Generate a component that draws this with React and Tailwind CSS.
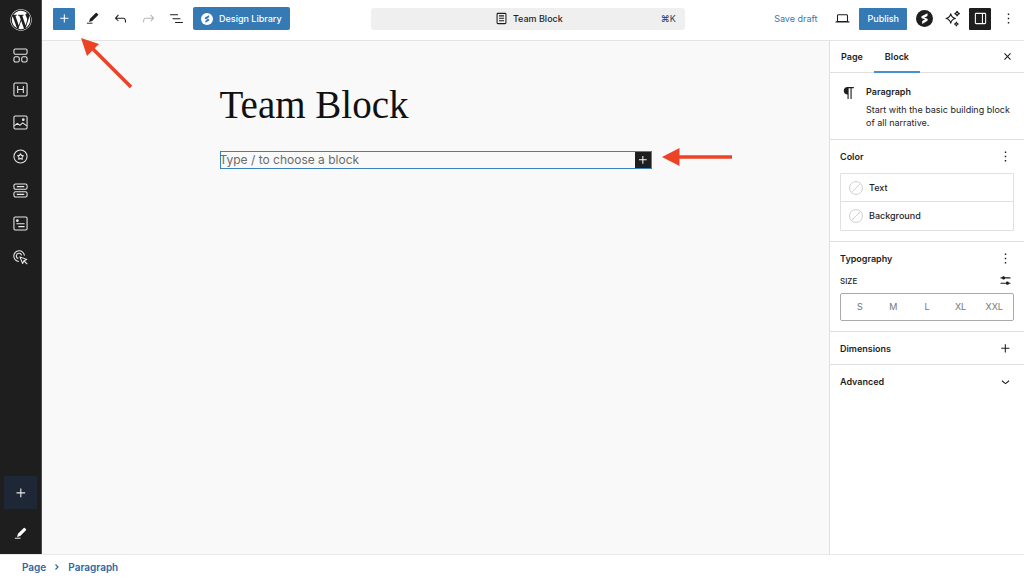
import { FaWordpress } from "react-icons/fa";

const ICONS = {
  plus: "M11 12.5V17.5H12.5V12.5H17.5V11H12.5V6H11V11H6V12.5H11Z",
  undo: "M18.3 11.7c-.6-.6-1.4-.9-2.3-.9H6.7l2.9-3.3-1.1-1-4.5 5L8.5 16l1-1-2.7-2.7H16c.5 0 .9.2 1.3.5 1 1 1 3.4 1 4.5v.3h1.5v-.2c0-1.5 0-4.3-1.5-5.7z",
  redo: "M15.6 6.5l-1.1 1 2.9 3.3H8c-.9 0-1.7.3-2.3.9-1.4 1.5-1.4 4.2-1.4 5.6v.2h1.5v-.3c0-1.1 0-3.5 1-4.5.3-.3.7-.5 1.3-.5h9.2L14.5 15l1.1 1.1 4.6-4.6-4.6-5z",
  listView: "M3 6h11v1.5H3V6Zm3.5 5.5h11V13h-11v-1.5ZM21 17H10v1.5h11V17Z",
  more: "M13 19h-2v-2h2v2zm0-6h-2v-2h2v2zm0-6h-2V5h2v2z",
  drawer:
    "M18 4H6c-1.1 0-2 .9-2 2v12c0 1.1.9 2 2 2h12c1.1 0 2-.9 2-2V6c0-1.1-.9-2-2-2zm-4 14.5H6c-.3 0-.5-.2-.5-.5V6c0-.3.2-.5.5-.5h8v13zm4.5-.5c0 .3-.2.5-.5.5h-2.5v-13H18c.3 0 .5.2.5.5v12z",
  desktop:
    "M20.5 16h-.7V8c0-1.1-.9-2-2-2H6.2c-1.1 0-2 .9-2 2v8h-.7c-.8 0-1.5.7-1.5 1.5h20c0-.8-.7-1.5-1.5-1.5zM5.7 8c0-.3.2-.5.5-.5h11.6c.3 0 .5.2.5.5v7.6H5.7V8z",
  page: "M15.5 7.5h-7V9h7V7.5Zm-7 3.5h7v1.5h-7V11Zm7 3.5h-7V16h7v-1.5ZM17 4H7a2 2 0 0 0-2 2v12a2 2 0 0 0 2 2h10a2 2 0 0 0 2-2V6a2 2 0 0 0-2-2ZM7 5.5h10a.5.5 0 0 1 .5.5v12a.5.5 0 0 1-.5.5H7a.5.5 0 0 1-.5-.5V6a.5.5 0 0 1 .5-.5Z",
  paragraph:
    "m9.996 14v-.225l.004 0v6.225h1.5v-14.5h2.5v14.5h1.5v-14.5h3v-1.5h-8.504c-2.761 0-5 2.239-5 5 0 2.761 2.239 5 5 5z",
  settings:
    "m19 7.5h-7.628c-.309-.874-1.142-1.5-2.122-1.5-.98 0-1.813.626-2.122 1.5h-2.128v1.5h2.128c.309.874 1.142 1.5 2.122 1.5.98 0 1.813-.626 2.122-1.5h7.628zm0 7.5h-2.128c-.309-.874-1.142-1.5-2.122-1.5s-1.813.626-2.122 1.5h-7.628v1.5h7.628c.309.874 1.142 1.5 2.122 1.5s1.813-.626 2.122-1.5h2.128z",
  chevronDown: "M17.5 11.6L12 16l-5.500-4.400.9-1.200L12 14l4.500-3.600 1 1.200z",
  close:
    "M12 13.06l3.712 3.713 1.061-1.06L13.061 12l3.712-3.712-1.06-1.06L12 10.938 8.288 7.227l-1.061 1.06L10.939 12l-3.712 3.712 1.06 1.061L12 13.061z",
};

function Icon({ name, className = "size-[17px]" }) {
  return (
    <svg viewBox="0 0 24 24" fill="currentColor" fillRule="evenodd" className={className} aria-hidden="true">
      <path d={ICONS[name]} />
    </svg>
  );
}

function Pencil({ className = "size-[17px]" }) {
  return (
    <svg viewBox="0 0 24 24" fill="currentColor" className={className} aria-hidden="true">
      <path d="M17.200 3.200a1.200 1.200 0 0 1 1.700 0l1.900 1.900a1.200 1.200 0 0 1 0 1.700l-9.300 9.300-5 1.400 1.400-5z" />
      <path d="M3 18.600h9v2H3z" opacity=".75" />
    </svg>
  );
}

// Lightning-shaped "S" on a disc, the plugin's mark
function SpectraMark({ className, disc, bolt }) {
  return (
    <svg viewBox="0 0 24 24" className={className} aria-hidden="true">
      <circle cx="12" cy="12" r="12" fill={disc} />
      <path
        fill={bolt}
        d="M16.200 4.500v4l-4.500 2.500 3.600 1c1.600.6 1.900 2.500.4 3.400l-7 4.300v-4l4.200-2.500-4-1.100c-1.700-.6-1.900-2.600-.4-3.500z"
      />
    </svg>
  );
}

function Sparkles() {
  return (
    <svg viewBox="0 0 24 24" fill="none" stroke="currentColor" strokeWidth="1.700" strokeLinejoin="round" className="size-[17px]" aria-hidden="true">
      <path d="M9.500 5.500c.9 4 2.500 5.600 6.500 6.500-4 .9-5.600 2.500-6.500 6.500-.9-4-2.500-5.600-6.500-6.500 4-.9 5.600-2.500 6.500-6.500z" />
      <path d="M18.500 1.800c.5 1.900 1.200 2.700 3.200 3.200-2 .5-2.700 1.300-3.200 3.200-.5-1.900-1.200-2.700-3.200-3.200 2-.5 2.700-1.300 3.200-3.200zM17.500 17.200c.4 1.600 1 2.200 2.600 2.600-1.600.4-2.200 1-2.600 2.600-.4-1.600-1-2.200-2.600-2.600 1.600-.4 2.200-1 2.600-2.600z" />
    </svg>
  );
}

const RAIL_ITEMS = [
  {
    label: "Container",
    art: (
      <>
        <rect x="1.500" y="1.500" width="21" height="8.500" rx="2" />
        <rect x="1.500" y="14" width="8.500" height="8.500" rx="2.500" />
        <rect x="14" y="14" width="8.500" height="8.500" rx="2.500" />
      </>
    ),
  },
  {
    label: "Heading",
    art: (
      <>
        <rect x="1.500" y="1.500" width="21" height="21" rx="2" />
        <path d="M7.500 6.500v11M16.500 6.500v11M7.500 12h9" />
      </>
    ),
  },
  {
    label: "Image",
    art: (
      <>
        <rect x="1.500" y="1.500" width="21" height="21" rx="2" />
        <path d="M2 17.500l5-4 4 3 4.500-4 6.500 5" />
        <circle cx="16.500" cy="7.500" r="1.300" fill="currentColor" />
      </>
    ),
  },
  {
    label: "Icon",
    art: (
      <>
        <circle cx="12" cy="12" r="10.500" />
        <path d="M12 7.500l1.500 2.700 3.100.6-2.100 2.400.4 3.200-2.900-1.300-2.900 1.300.4-3.200-2.100-2.400 3.100-.6z" />
      </>
    ),
  },
  {
    label: "Buttons",
    art: (
      <>
        <rect x="1.500" y="1.500" width="21" height="8.500" rx="2.500" />
        <rect x="1.500" y="14" width="21" height="8.500" rx="2.500" />
        <path d="M6 5.800h12M6 18.200h12" />
      </>
    ),
  },
  {
    label: "Info Box",
    art: (
      <>
        <rect x="1.500" y="1.500" width="21" height="21" rx="2" />
        <path d="M5.500 12.500h13M8.500 17h10" />
        <circle cx="7" cy="7.500" r="1.300" fill="currentColor" />
      </>
    ),
  },
  {
    label: "Call to Action",
    art: (
      <>
        <path d="M9.500 18.300A8.500 8.500 0 1 1 18.300 9" />
        <path d="M8.500 13.700A4.300 4.300 0 1 1 13.800 8.500" />
        <path d="M11 11l11 4.200-4.600 1.900-2 4.600z" />
        <path d="M17.800 17.600l5 5" />
      </>
    ),
  },
];

function Rail() {
  return (
    <aside className="flex w-[42px] shrink-0 flex-col items-center border-r border-[#4a4a4a] bg-[#1e1e1e] text-[#e8e8e8]">
      <a href="#dashboard" aria-label="Dashboard" className="flex h-[39px] items-center text-white">
        <FaWordpress className="size-[22px]" />
      </a>
      <nav className="grid h-[235px] w-full grid-rows-7">
        {RAIL_ITEMS.map((item) => (
          <button key={item.label} type="button" aria-label={item.label} className="flex items-center justify-center">
            <svg viewBox="0 0 24 24" fill="none" stroke="currentColor" strokeWidth="1.700" strokeLinejoin="round" className="size-[15px]">
              {item.art}
            </svg>
          </button>
        ))}
      </nav>
      <div className="mt-auto flex flex-col items-center gap-2 pb-1">
        <button type="button" aria-label="Add quick block" className="flex size-[33px] items-center justify-center bg-[#1e2736]">
          <Icon name="plus" className="size-[18px]" />
        </button>
        <button type="button" aria-label="Edit quick blocks" className="flex size-[33px] items-center justify-center text-white">
          <Pencil className="size-[15px]" />
        </button>
      </div>
    </aside>
  );
}

function ToolButton({ label, className = "", children }) {
  return (
    <button type="button" aria-label={label} className={`flex size-[22px] shrink-0 items-center justify-center rounded-[1px] ${className}`}>
      {children}
    </button>
  );
}

function Header() {
  return (
    <header className="flex h-[41px] shrink-0 items-center border-b border-[#e4e4e4] bg-white pr-[5px] pb-[3px] pl-[11px]">
      <div className="flex items-center gap-[6px]">
        <ToolButton label="Block inserter" className="bg-[#3579b5] text-white">
          <Icon name="plus" />
        </ToolButton>
        <ToolButton label="Tools">
          <Pencil className="size-[15px]" />
        </ToolButton>
        <ToolButton label="Undo">
          <Icon name="undo" />
        </ToolButton>
        <ToolButton label="Redo" className="text-[#b8b8b8]">
          <Icon name="redo" />
        </ToolButton>
        <ToolButton label="Document overview">
          <Icon name="listView" />
        </ToolButton>
        <button type="button" className="flex h-[23px] items-center gap-[6px] rounded-[2px] bg-[#3579b5] px-2 font-medium whitespace-nowrap text-white">
          <SpectraMark className="size-3" disc="#fff" bolt="#3579b5" />
          Design Library
        </button>
      </div>

      <div className="mr-2 flex flex-1 justify-center">
        <button type="button" className="grid h-[22px] w-full max-w-[314px] grid-cols-[1fr_auto_1fr] items-center rounded-[3px] bg-[#efefef] px-[9px]">
          <span className="col-start-2 flex items-center gap-[3px] font-medium">
            <Icon name="page" />
            Team Block
          </span>
          <span className="text-right text-[#3c3c3c]">⌘K</span>
        </button>
      </div>

      <div className="flex items-center gap-[6px]">
        <button type="button" className="mr-2 whitespace-nowrap text-[#3579b5]">Save draft</button>
        <ToolButton label="View">
          <Icon name="desktop" />
        </ToolButton>
        <button type="button" className="h-[22px] rounded-[1px] bg-[#3579b5] px-2 font-medium text-white">Publish</button>
        <ToolButton label="Spectra settings">
          <SpectraMark className="size-[17px]" disc="#1e1e1e" bolt="#fff" />
        </ToolButton>
        <ToolButton label="AI assistant">
          <Sparkles />
        </ToolButton>
        <ToolButton label="Settings" className="bg-[#1e1e1e] text-white">
          <Icon name="drawer" />
        </ToolButton>
        <ToolButton label="Options">
          <Icon name="more" />
        </ToolButton>
      </div>
    </header>
  );
}

function Canvas() {
  return (
    <main className="flex-1 bg-[#f9f9f9] pt-10">
      <div className="mx-auto max-w-[432px]">
        <h1 className="font-['Liberation_Serif',serif] text-[39px] leading-[48px] text-[#111]">Team Block</h1>
        <div className="mt-[22px] flex h-[18px] border-y border-r border-[#3f83bd] shadow-[inset_1px_0_0_#3f83bd]">
          <input
            type="text"
            aria-label="Empty block"
            placeholder="Type / to choose a block"
            className="min-w-0 flex-1 bg-transparent text-xs leading-4 outline-none placeholder:text-[#6b6b6b]"
          />
          <button type="button" aria-label="Add block" className="flex w-4 items-center justify-center bg-[#1e1e1e] text-white">
            <Icon name="plus" className="size-4 shrink-0" />
          </button>
        </div>
      </div>
    </main>
  );
}

function PanelHeader({ title, icon }) {
  return (
    <div className="flex items-center justify-between">
      <h2 className="font-semibold">{title}</h2>
      <button type="button" aria-label={`${title} options`}>
        <Icon name={icon} />
      </button>
    </div>
  );
}

function Inspector() {
  return (
    <aside className="w-[195px] shrink-0 border-l border-[#e0e0e0] bg-white">
      <div className="flex h-8 border-b border-[#e0e0e0] font-semibold">
        <button type="button" className="px-[11px]">Page</button>
        <button type="button" className="-mb-px px-[11px] shadow-[inset_0_-2px_0_#4a90d0]">Block</button>
        <button type="button" aria-label="Close settings" className="mr-2 ml-auto">
          <Icon name="close" />
        </button>
      </div>

      <section className="flex gap-2 border-b border-[#e0e0e0] px-[10px] pt-[11px] pb-[10px]">
        <Icon name="paragraph" className="size-[18px] shrink-0" />
        <div>
          <h2 className="leading-4 font-semibold">Paragraph</h2>
          <p className="mt-[3px] leading-[13px]">Start with the basic building block of all narrative.</p>
        </div>
      </section>

      <section className="border-b border-[#e0e0e0] px-[10px] pt-2 pb-[10px]">
        <PanelHeader title="Color" icon="more" />
        <div className="mt-2 divide-y divide-[#e0e0e0] rounded-[1px] border border-[#e0e0e0] font-medium">
          {["Text", "Background"].map((name) => (
            <button key={name} type="button" className="flex h-7 w-full items-center gap-[6px] px-2">
              <svg viewBox="0 0 14 14" className="size-[14px]" fill="none" stroke="#d0d0d0" aria-hidden="true">
                <circle cx="7" cy="7" r="6.500" />
                <path d="M2.500 11.500l9-9" />
              </svg>
              {name}
            </button>
          ))}
        </div>
      </section>

      <section className="border-b border-[#e0e0e0] px-[10px] pt-2 pb-[10px]">
        <PanelHeader title="Typography" icon="more" />
        <div className="mt-[5px] flex items-center justify-between">
          <span className="text-[8px] font-medium">SIZE</span>
          <button type="button" aria-label="Set custom size">
            <Icon name="settings" />
          </button>
        </div>
        <div className="mt-1 grid h-7 grid-cols-5 rounded-[2px] border border-[#aaa] px-[2px] text-[#757575]">
          {["S", "M", "L", "XL", "XXL"].map((size) => (
            <button key={size} type="button">{size}</button>
          ))}
        </div>
      </section>

      <section className="border-b border-[#e0e0e0] px-[10px] pt-2 pb-[7px]">
        <PanelHeader title="Dimensions" icon="plus" />
      </section>
      <section className="px-[10px] py-2">
        <PanelHeader title="Advanced" icon="chevronDown" />
      </section>
    </aside>
  );
}

// Red tutorial arrows that lie over the editor
function Pointers() {
  return (
    <>
      <svg viewBox="0 0 52 51" className="pointer-events-none absolute top-[38px] left-[81px] h-[51px] w-[52px]" aria-hidden="true">
        <path d="M12 11l38 38" stroke="#ec4226" strokeWidth="3.500" />
        <path d="M0 0l18 6L6 18z" fill="#ec4226" />
      </svg>
      <svg viewBox="0 0 70 18" className="pointer-events-none absolute top-[148px] left-[662px] h-[18px] w-[70px]" aria-hidden="true">
        <path d="M14 9h56" stroke="#ec4226" strokeWidth="3.300" />
        <path d="M0 9L17.500 0v18z" fill="#ec4226" />
      </svg>
    </>
  );
}

export default function App() {
  return (
    <div className="relative flex h-screen flex-col overflow-hidden bg-white font-['Inter',sans-serif] text-[9px] text-[#1e1e1e]">
      <div className="flex min-h-0 flex-1">
        <Rail />
        <div className="flex min-w-0 flex-1 flex-col">
          <Header />
          <div className="flex min-h-0 flex-1">
            <Canvas />
            <Inspector />
          </div>
        </div>
      </div>
      <footer className="flex h-[25px] shrink-0 items-center gap-[7px] border-t border-[#e8e8e8] px-[22px] text-[10px] font-semibold text-[#2b67a5]">
        <a href="#page">Page</a>
        <svg viewBox="0 0 8 8" fill="none" stroke="currentColor" strokeWidth="1.200" className="size-2" aria-hidden="true">
          <path d="M2.500 1.500L5 4 2.500 6.500" />
        </svg>
        <a href="#paragraph">Paragraph</a>
      </footer>
      <Pointers />
    </div>
  );
}
